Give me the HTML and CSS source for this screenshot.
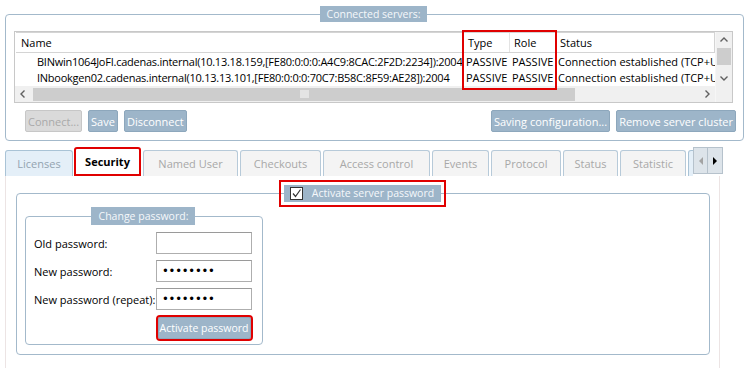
FILE: index.html
```html
<!DOCTYPE html>
<html lang="en">
<head>
  <meta charset="UTF-8"/>
  <title>License server - Security</title>
  <link rel="stylesheet" href="styles.css">
</head>
<body>
  <fieldset class="group servers">
    <legend>Connected servers:</legend>
    <div class="list">
      <div class="list-body">
        <div class="list-head">
          <span class="col col-name">Name</span>
          <span class="col col-type">Type</span>
          <span class="col col-role">Role</span>
          <span class="col col-status">Status</span>
        </div>
        <div class="list-row">
          <span class="col col-name">BINwin1064JoFI.cadenas.internal(10.13.18.159,[FE80:0:0:0:A4C9:8CAC:2F2D:2234]):2004</span>
          <span class="col col-type">PASSIVE</span>
          <span class="col col-role">PASSIVE</span>
          <span class="col col-status">Connection established (TCP+UDP)</span>
        </div>
        <div class="list-row">
          <span class="col col-name">INbookgen02.cadenas.internal(10.13.13.101,[FE80:0:0:0:70C7:B58C:8F59:AE28]):2004</span>
          <span class="col col-type">PASSIVE</span>
          <span class="col col-role">PASSIVE</span>
          <span class="col col-status">Connection established (TCP+UDP)</span>
        </div>
        <div class="hscroll">
          <span class="sb-arrow"><svg width="16" height="16" viewBox="0 0 16 16"><path d="M9.5 4.5 L6 8 L9.5 11.5" fill="none" stroke="#606060" stroke-width="1.4"/></svg></span>
          <span class="h-thumb"><span class="grip"></span></span>
          <span class="h-track"></span>
          <span class="sb-arrow"><svg width="16" height="16" viewBox="0 0 16 16"><path d="M6.5 4.5 L10 8 L6.5 11.5" fill="none" stroke="#606060" stroke-width="1.4"/></svg></span>
        </div>
      </div>
      <div class="vscroll">
        <span class="sb-arrow"><svg width="16" height="16" viewBox="0 0 16 16"><path d="M4.5 9.5 L8 6 L11.5 9.5" fill="none" stroke="#606060" stroke-width="1.4"/></svg></span>
        <span class="v-thumb"></span>
        <span class="v-track"></span>
        <span class="sb-arrow"><svg width="16" height="16" viewBox="0 0 16 16"><path d="M4.5 6.5 L8 10 L11.5 6.5" fill="none" stroke="#606060" stroke-width="1.4"/></svg></span>
        <span class="corner"></span>
      </div>
      <div class="mark mark-cols"></div>
    </div>
    <div class="actions">
      <div class="btn-group">
        <button class="btn" disabled>Connect...</button>
        <button class="btn">Save</button>
        <button class="btn">Disconnect</button>
      </div>
      <div class="btn-group">
        <button class="btn">Saving configuration...</button>
        <button class="btn">Remove server cluster</button>
      </div>
    </div>
  </fieldset>

  <div class="tabs">
    <div class="tab-strip">
      <span class="tab tab-licenses">Licenses</span>
      <span class="tab tab-active">Security</span>
      <span class="tab tab-named">Named User</span>
      <span class="tab tab-checkouts">Checkouts</span>
      <span class="tab tab-access">Access control</span>
      <span class="tab tab-events">Events</span>
      <span class="tab tab-protocol">Protocol</span>
      <span class="tab tab-status">Status</span>
      <span class="tab tab-statistic">Statistic</span>
      <span class="tab tab-more"></span>
    </div>
    <div class="tab-arrows">
      <span class="tab-arrow"><svg width="8" height="10" viewBox="0 0 8 10"><path d="M6 1 L2 5 L6 9 Z" fill="#a3a3a3"/></svg></span>
      <span class="tab-arrow"><svg width="8" height="10" viewBox="0 0 8 10"><path d="M2 1 L6 5 L2 9 Z" fill="#000"/></svg></span>
    </div>
  </div>

  <div class="panel">
    <fieldset class="group activate">
      <legend>
        <label class="check-label">
          <span class="check"><svg width="11" height="11" viewBox="0 0 11 11"><path d="M2 5.5 L4.5 8.5 L9.5 1.5" fill="none" stroke="#333" stroke-width="1.2"/></svg></span>
          Activate server password
        </label>
      </legend>

      <fieldset class="group change">
        <legend>Change password:</legend>
        <div class="form-grid">
          <label for="old-pw">Old password:</label>
          <input type="password" id="old-pw"/>
          <label for="new-pw">New password:</label>
          <input type="password" id="new-pw" value="secret12"/>
          <label for="new-pw2">New password (repeat):</label>
          <input type="password" id="new-pw2" value="secret12"/>
          <button class="btn btn-activate">Activate password</button>
        </div>
      </fieldset>
    </fieldset>
  </div>
</body>
</html>
```

FILE: styles.css
```css
/* ===== Global ===== */
* { margin: 0; padding: 0; box-sizing: border-box; }
body {
  font-family: 'Open Sans', 'Noto Sans', sans-serif;
  font-size: 11px;
  color: #000;
  background: #fff;
  width: 750px;
  height: 368px;
  overflow: hidden;
}

/* ===== Group boxes ===== */
.group {
  border: 1px solid #a3b9cb;
  border-radius: 4px;
  min-width: 0;
}
.group > legend {
  margin: 0 auto;
  padding: 0 7px;
  background: #9db5c9;
  color: #f5f8fb;
  font-size: 10.5px;
  line-height: 16px;
}

.servers {
  margin: 6px 6px 0 5px;
  padding: 9px 10px 8px 8px;
}

/* ===== Server list ===== */
.list {
  position: relative;
  display: flex;
  height: 72px;
  border: 1px solid #c8c8c8;
}
.list-body {
  flex: 1;
  min-width: 0;
  display: flex;
  flex-direction: column;
  overflow: hidden;
}
.list-head {
  display: flex;
  height: 21px;
  margin: 0 0 1px 1px;
  border: 1px solid #d4d4d4;
  border-left: none;
}
.list-head .col { line-height: 19px; border-right: 1px solid #e3e3e3; }
.list-row { display: flex; height: 16px; line-height: 16px; }
.col { flex: none; white-space: nowrap; overflow: hidden; }
.col-name { width: 447px; padding-left: 5px; }
.col-type { width: 47px; padding-left: 5px; }
.col-role { width: 47px; padding-left: 4px; }
.col-status { flex: 1; padding-left: 3px; }
.list-head .col-status { border-right: none; }
.list-row .col-name { padding-left: 22px; letter-spacing: -0.25px; }
.list-row .col-type { padding-left: 4px; }
.list-row .col-role { padding-left: 3px; }
.list-row .col-status { padding-left: 2px; }

/* scrollbars */
.hscroll {
  display: flex;
  align-items: center;
  height: 16px;
  margin-top: auto;
  background: #f0f0f0;
}
.sb-arrow { flex: none; width: 16px; height: 16px; display: flex; }
.h-thumb {
  flex: none;
  width: 542px;
  height: 13px;
  margin-left: 2px;
  background: #cdcdcd;
  display: flex;
  align-items: center;
  justify-content: center;
}
.grip { width: 9px; height: 8px; background: #e4e4e4; }
.h-track { flex: 1; }
.vscroll {
  flex: none;
  width: 17px;
  display: flex;
  flex-direction: column;
  background: #f0f0f0;
  border-left: 1px solid #f6f6f6;
}
.v-thumb { height: 17px; margin: 0 1px; background: #cdcdcd; }
.v-track { flex: 1; }
.corner { height: 16px; background: #f0f0f0; }

/* annotation frames */
.mark { position: absolute; border: 2px solid #e00000; }
.mark-cols { left: 447px; top: -2px; width: 95px; height: 60px; }

/* ===== Buttons ===== */
.actions {
  display: flex;
  justify-content: space-between;
  margin: 7px -3px 0 11px;
}
.btn-group { display: flex; gap: 6px; }
.btn {
  height: 22px;
  padding: 0 2px;
  background: #9db5c9;
  color: #fff;
  border: 1px solid #8da7bc;
  border-radius: 2px;
  font: inherit;
  font-size: 11px;
  white-space: nowrap;
  cursor: pointer;
}
.btn:disabled {
  background: #dadada;
  color: #a9a9a9;
  border-color: #c7c7c7;
  cursor: default;
}

/* ===== Tabs ===== */
.tabs {
  display: flex;
  height: 29px;
  margin: 6px 0 0 5px;
}
.tab-strip {
  display: flex;
  align-items: flex-end;
  gap: 2px;
  width: 688px;
  overflow: hidden;
}
.tab {
  flex: none;
  height: 26px;
  display: flex;
  align-items: center;
  justify-content: center;
  border: 1px solid #b7cad9;
  border-bottom: none;
  border-radius: 3px 3px 0 0;
  background: #f4f4f4;
  color: #a8a8a8;
  font-size: 11px;
}
.tab-licenses { width: 68px; background: #e4eff8; border-color: #a9c3d6; color: #93a3b0; }
.tab-active {
  width: 67px;
  height: 29px;
  margin-left: -1px;
  background: #fff;
  border: 2px solid #e00000;
  color: #000;
  font-weight: 700;
}
.tab-named { width: 95px; }
.tab-checkouts { width: 81px; }
.tab-access { width: 107px; }
.tab-events { width: 57px; }
.tab-protocol { width: 70px; }
.tab-status { width: 55px; }
.tab-statistic { width: 66px; }
.tab-more { width: 40px; background: #e4eff8; border-color: #a9c3d6; }
.tab-arrows { display: flex; height: 27px; }
.tab-arrow {
  width: 15px;
  display: flex;
  align-items: center;
  justify-content: center;
  background: #dde4ea;
  border: 1px solid #b6c2cc;
}
.tab-arrow + .tab-arrow { border-left: none; }

/* ===== Tab panel ===== */
.panel {
  width: 715px;
  height: 200px;
  margin-left: 5px;
  padding: 9px 9px 0 10px;
  border-left: 1px solid #ece4e4;
  border-right: 1px solid #ece4e4;
}
.activate { padding: 5px 9px 9px 8px; }
.activate > legend { padding: 0 7px 0 6px; line-height: 17px; outline: 2px solid #e00000; outline-offset: 3px; }
.check-label { display: flex; align-items: center; gap: 9px; }
.check {
  width: 13px;
  height: 13px;
  background: #fff;
  border: 1px solid #333;
  display: flex;
  align-items: center;
  justify-content: center;
}
.change { width: 238px; padding: 7px 10px 6px 8px; }
.change > legend { padding: 0 7px 0 8px; line-height: 18px; }

.form-grid {
  display: grid;
  grid-template-columns: 1fr 96px;
  grid-auto-rows: 22px;
  row-gap: 6px;
  align-items: center;
}
.form-grid input {
  height: 22px;
  border: 1px solid #aeaeae;
  border-top-color: #9a9a9a;
  padding: 0 5px;
  font-family: 'DejaVu Sans', sans-serif;
  font-size: 11.5px;
  letter-spacing: -0.2px;
}
.btn-activate {
  grid-column: 2;
  justify-self: center;
  width: 93px;
  margin-top: 2px;
  padding: 0;
  font-size: 10.5px;
  outline: 2px solid #e00000;
}
```
